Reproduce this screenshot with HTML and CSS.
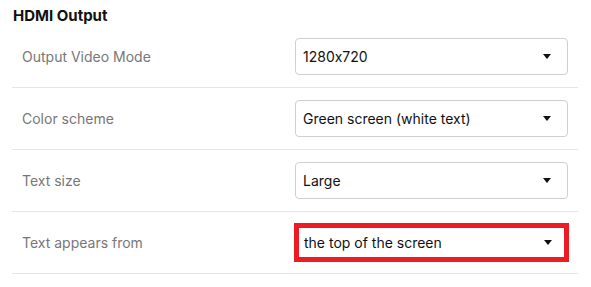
FILE: index.html
```html
<!DOCTYPE html>
<html lang="en">
<head>
    <meta charset="UTF-8">
    <title>HDMI Output</title>
    <link rel="stylesheet" href="styles.css">
</head>
<body>
    <div class="panel">
        <h2 class="panel-title">HDMI Output</h2>

        <div class="row">
            <div class="label">Output Video Mode</div>
            <div class="select">
                <span class="value">1280x720</span>
                <span class="caret"></span>
            </div>
        </div>

        <div class="row">
            <div class="label">Color scheme</div>
            <div class="select">
                <span class="value">Green screen (white text)</span>
                <span class="caret"></span>
            </div>
        </div>

        <div class="row">
            <div class="label">Text size</div>
            <div class="select">
                <span class="value">Large</span>
                <span class="caret"></span>
            </div>
        </div>

        <div class="row">
            <div class="label">Text appears from</div>
            <div class="select highlight">
                <span class="value">the top of the screen</span>
                <span class="caret"></span>
            </div>
        </div>
    </div>
</body>
</html>
```

FILE: styles.css
```css
body {
    margin: 0;
    background: #fff;
    font-family: Inter, "Liberation Sans", sans-serif;
    font-feature-settings: "calt" 0;
    color: #111;
}

.panel {
    width: 566px;
    margin-left: 12px;
}

.panel-title {
    margin: 0;
    padding: 7px 0 0 1px;
    height: 19px;
    font-size: 15px;
    line-height: 18px;
    font-weight: 700;
    color: #111;
}

.row {
    display: flex;
    align-items: center;
    padding: 12px 10px;
    border-bottom: 1px solid #e6e6e6;
}

.label {
    flex: 1;
    font-size: 14px;
    color: #777;
}

.select {
    width: 273px;
    height: 37px;
    box-sizing: border-box;
    display: flex;
    align-items: center;
    justify-content: space-between;
    padding: 0 16px 0 7px;
    border: 1px solid #cfcfcf;
    border-radius: 4px;
    font-size: 14px;
    color: #111;
}

.select.highlight {
    width: 275px;
    height: 39px;
    margin: -1px;
    padding: 0 12px 0 5px;
    border: 5px solid #ed1c24;
    border-radius: 0;
}

.caret {
    width: 0;
    height: 0;
    border-left: 4.5px solid transparent;
    border-right: 4.5px solid transparent;
    border-top: 5px solid #111;
}
```
